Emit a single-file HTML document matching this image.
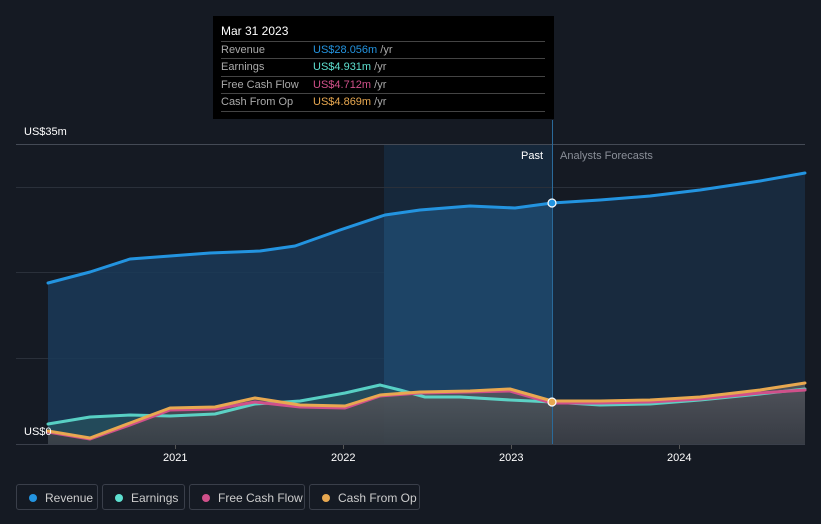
<!DOCTYPE html>
<html><head><meta charset="utf-8"><style>
body{margin:0;width:821px;height:524px;background:#151a23;font-family:"Liberation Sans",sans-serif;overflow:hidden;position:relative}
.t{position:absolute;font-size:11px;color:#fff}
.tip{position:absolute;left:213px;top:16px;width:341px;height:103px;background:#000}
.tip .h{position:absolute;left:8px;top:8px;font-size:12px;color:#fff}
.row{position:absolute;left:8px;width:324px;border-top:1px solid #444;height:17px;font-size:11px;line-height:17px;color:#aaa}
.row span{position:absolute;left:92px}
.row i{font-style:normal;color:#aaa}
.leg{position:absolute;top:484px;height:26px;border:1px solid #3a3f4a;border-radius:3px;font-size:12px;color:#ccc;line-height:26px;box-sizing:border-box}
.leg b{position:absolute;left:12px;top:9px;width:8px;height:8px;border-radius:50%}
.leg span{position:absolute;left:28px;top:0}
</style></head><body>
<svg width="821" height="524" style="position:absolute;left:0;top:0">
<defs>
<linearGradient id="g" x1="0" y1="0" x2="0" y2="1"><stop offset="0" stop-color="#5a5a60"/><stop offset="1" stop-color="#3c3e44"/></linearGradient>
</defs>
<rect x="384" y="144" width="168" height="300" fill="#16283b"/>
<line x1="16" y1="144.5" x2="805" y2="144.5" stroke="#444a55"/>
<line x1="16" y1="187.5" x2="805" y2="187.5" stroke="#2a303a"/>
<line x1="16" y1="272.5" x2="805" y2="272.5" stroke="#2a303a"/>
<line x1="16" y1="358.5" x2="805" y2="358.5" stroke="#2a303a"/>
<path d="M48,283 L90,272 L130,259 L170,256 L210,253 L260,251 L295,246 L340,230 L385,215 L420,210 L470,206 L515,208 L552,203 L552,444 L48,444Z" fill="#1a3a58" opacity="0.85"/>
<path d="M384,215 L420,210 L470,206 L515,208 L552,203 L552,444 L384,444Z" fill="#1d4466"/>
<path d="M552,203 L600,200 L650,196 L700,190 L760,181 L805,173 L805,444 L552,444Z" fill="#182a3e"/>
<path d="M48,424 L90,417 L130,415 L170,416 L215,414 L255,404 L300,401 L345,393 L380,385 L400,390 L425,397 L460,397 L510,400 L552,402 L552,444 L48,444Z" fill="#2a5a60" opacity="0.6"/>
<path d="M48,431 L90,439 L130,424 L170,408 L215,407 L255,398 L300,405 L345,406 L380,395 L420,392 L470,391 L510,389 L552,402 L600,401 L650,400 L700,397 L760,390 L805,383 L805,444 L48,444Z" fill="url(#g)" opacity="0.85"/>
<line x1="552.5" y1="120" x2="552.5" y2="444" stroke="#2a6a9a"/>
<g fill="none" stroke-width="3" stroke-linejoin="round" stroke-linecap="round">
<polyline points="48,283 90,272 130,259 170,256 210,253 260,251 295,246 340,230 385,215 420,210 470,206 515,208 552,203 600,200 650,196 700,190 760,181 805,173" stroke="#2394e0"/>
<polyline points="48,424 90,417 130,415 170,416 215,414 255,404 300,401 345,393 380,385 400,390 425,397 460,397 510,400 552,402 600,405 650,404 700,400 760,394 805,389" stroke="#5ee0d0" opacity="0.9"/>
<polyline points="48,432 90,439 130,425 170,410 215,409 255,402 300,407 345,408 380,396 420,393 470,392 510,391 552,403 600,403 650,402 700,399 760,393 805,390" stroke="#d0508a"/>
<polyline points="48,431 90,438 130,423 170,408 215,407 255,398 300,405 345,406 380,395 420,392 470,391 510,389 552,401 600,401 650,400 700,397 760,390 805,383" stroke="#e8a850"/>
</g>
<circle cx="552" cy="203" r="4" fill="#2394e0" stroke="#fff" stroke-width="1.2"/>
<circle cx="552" cy="402" r="4" fill="#e8a850" stroke="#fff" stroke-width="1.2"/>
<line x1="16" y1="444.5" x2="805" y2="444.5" stroke="#3a3f4a"/>
<line x1="175.5" y1="445" x2="175.5" y2="449" stroke="#555"/>
<line x1="343.5" y1="445" x2="343.5" y2="449" stroke="#555"/>
<line x1="511.5" y1="445" x2="511.5" y2="449" stroke="#555"/>
<line x1="679.5" y1="445" x2="679.5" y2="449" stroke="#555"/>
</svg>
<div class="t" style="left:24px;top:126px">US$35m</div>
<div class="t" style="left:24px;top:426px">US$0</div>
<div class="t" style="left:521px;top:150px">Past</div>
<div class="t" style="left:560px;top:150px;color:#8a8f98">Analysts Forecasts</div>
<div class="t" style="left:163px;top:452px">2021</div>
<div class="t" style="left:331px;top:452px">2022</div>
<div class="t" style="left:499px;top:452px">2023</div>
<div class="t" style="left:667px;top:452px">2024</div>
<div class="tip">
<div class="h">Mar 31 2023</div>
<div class="row" style="top:25px">Revenue<span><b style="font-weight:normal;color:#2394e0">US$28.056m</b> <i>/yr</i></span></div>
<div class="row" style="top:42px">Earnings<span><b style="font-weight:normal;color:#5ee0d0">US$4.931m</b> <i>/yr</i></span></div>
<div class="row" style="top:60px">Free Cash Flow<span><b style="font-weight:normal;color:#d0508a">US$4.712m</b> <i>/yr</i></span></div>
<div class="row" style="top:77px;border-bottom:1px solid #444">Cash From Op<span><b style="font-weight:normal;color:#e8a850">US$4.869m</b> <i>/yr</i></span></div>
</div>
<div class="leg" style="left:16px;width:82px"><b style="background:#2394e0"></b><span>Revenue</span></div>
<div class="leg" style="left:102px;width:83px"><b style="background:#5ee0d0"></b><span>Earnings</span></div>
<div class="leg" style="left:189px;width:116px"><b style="background:#d0508a"></b><span>Free Cash Flow</span></div>
<div class="leg" style="left:309px;width:111px"><b style="background:#e8a850"></b><span>Cash From Op</span></div>
</body></html>
